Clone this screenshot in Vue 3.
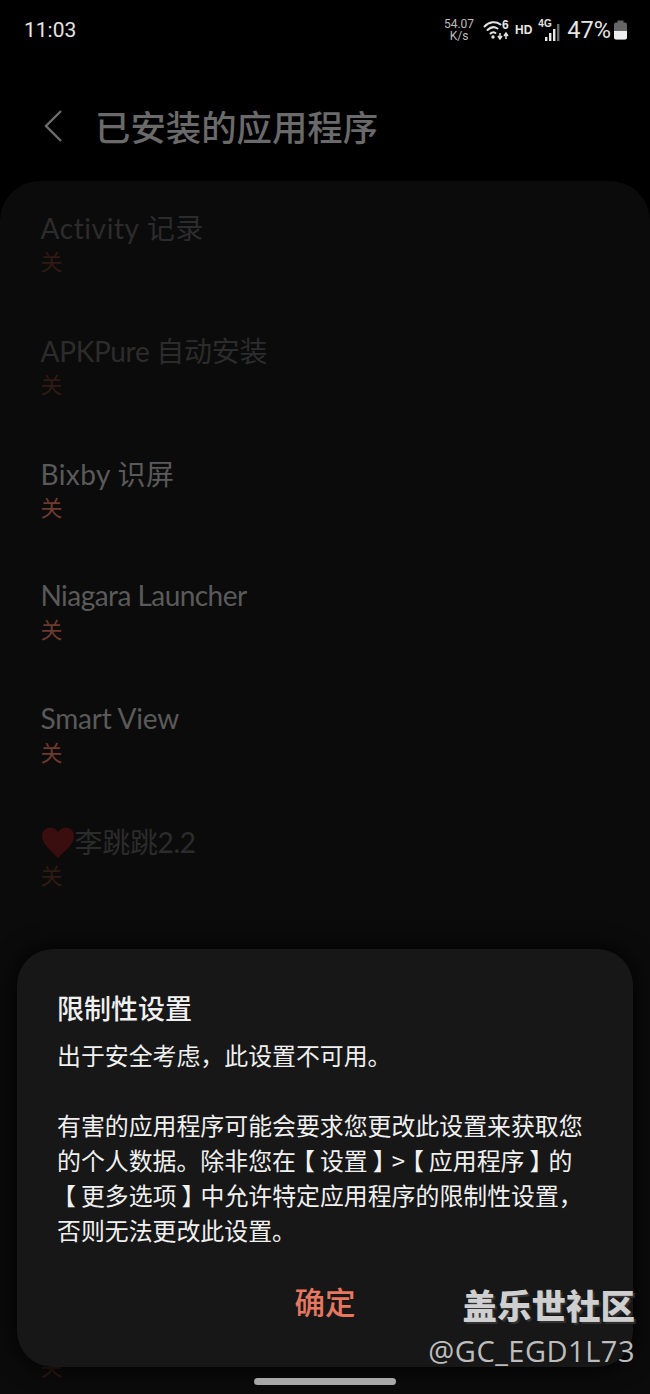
<script setup>
// track 是各行的字距，原图字体比 Lato 略宽或略窄
// covered 的行被弹窗完全挡住，不渲染文字
const apps = [
  { name: 'Activity 记录', tone: 'dim', track: '0.6px' },
  { name: 'APKPure 自动安装', tone: 'dim', track: '-0.3px' },
  { name: 'Bixby 识屏', tone: 'bright', track: '0.4px' },
  { name: 'Niagara Launcher', tone: 'bright', track: '-0.55px' },
  { name: 'Smart View', tone: 'bright', track: '-0.2px' },
  { name: '李跳跳2.2', tone: 'dim', heart: true, track: '-0.3px' },
  { name: '', tone: 'dim', covered: true },
  { name: '', tone: 'dim', covered: true },
  { name: '', tone: 'dim', covered: true },
  { name: '', tone: 'dim' }
]
</script>

<template>
  <div class="screen">
    <!-- 状态栏 -->
    <div class="status-bar">
      <span class="time">11:03</span>
      <div class="status-right">
        <div class="speed"><span>54.07</span><span>K/s</span></div>
        <svg class="wifi" width="28" height="22" viewBox="0 0 28 22">
          <g fill="none" stroke="#e4e4e4" stroke-width="2" stroke-linecap="round">
            <path d="M1.5 7.5C6 2.5 13 2 17.5 5.5" />
            <path d="M4.5 11C7.5 8 11.500 7.500 14.500 9.500" />
            <path d="M7.500 14.500C9 13 11 13 12.500 14" />
          </g>
          <circle cx="10" cy="18" r="1.7" fill="#e4e4e4" />
          <path d="M17 14v5M15 17l2 3 2-3M23 20v-5M21 17l2-3 2 3" fill="none" stroke="#e4e4e4" stroke-width="1.5" />
          <text x="19" y="10" class="wifi-six">6</text>
        </svg>
        <span class="hd">HD</span>
        <div class="signal">
          <span class="four-g">4G</span>
          <svg width="18" height="20" viewBox="0 0 18 20">
            <rect x="1" y="15" width="2.4" height="4" fill="#e8e8e8" />
            <rect x="5" y="11" width="2.4" height="8" fill="#e8e8e8" />
            <rect x="9" y="7" width="2.4" height="12" fill="#e8e8e8" />
            <rect x="13" y="2" width="2.4" height="17" fill="#6a6a6a" />
          </svg>
        </div>
        <span class="battery-text">47%</span>
        <svg width="15" height="20" viewBox="0 0 15 20">
          <rect x="4.500" y="0.500" width="6" height="2.500" fill="#666" />
          <rect x="1" y="2.500" width="13" height="17" rx="2" fill="#666" />
          <path d="M1 11h13v6.500a2 2 0 0 1-2 2H3a2 2 0 0 1-2-2z" fill="#eee" />
        </svg>
      </div>
    </div>

    <!-- 标题栏 -->
    <div class="app-bar">
      <svg class="back" width="20" height="34" viewBox="0 0 20 34">
        <path d="M18 2L3 17l15 15" fill="none" stroke="#6d6d6d" stroke-width="2.4" />
      </svg>
      <h1 class="title">已安装的应用程序</h1>
    </div>

    <!-- 应用列表 -->
    <div class="list">
      <div v-for="(app, i) in apps" :key="i" class="row" :class="app.tone">
        <div class="row-name" :style="{ letterSpacing: app.track }">
          <svg v-if="app.heart" class="heart" width="34" height="34" viewBox="0 0 34 34">
            <path d="M17 32C12 26 1 19 1 10 1 4.500 5 1.500 9.500 1.500 13 1.500 15.500 3.500 17 6.500 18.500 3.500 21 1.500 24.500 1.500 29 1.500 33 4.500 33 10 33 19 22 26 17 32Z" fill="#3a0d0f" />
          </svg>
          <span>{{ app.name }}</span>
        </div>
        <div v-if="!app.covered" class="row-state">关</div>
      </div>
    </div>

    <!-- 限制性设置弹窗 -->
    <div class="dialog">
      <h2 class="dialog-title">限制性设置</h2>
      <p class="dialog-text">出于安全考虑，此设置不可用。</p>
      <p class="dialog-text para">
        有害的应用程序可能会要求您更改此设置来获取您<br />
        的个人数据。除非您在<span class="lb">【</span>设置<span class="rb">】</span>&gt;<span class="lb">【</span>应用程序<span class="rb">】</span>的<br />
        <span class="lb">【</span>更多选项<span class="rb">】</span>中允许特定应用程序的限制性设置，<br />
        否则无法更改此设置。
      </p>
      <div class="dialog-actions">确定</div>
    </div>

    <div class="watermark">
      <div class="wm-top">盖乐世社区</div>
      <div class="wm-id">@GC_EGD1L73</div>
    </div>

    <div class="home-bar"></div>
  </div>
</template>

<style>
html, body { margin: 0; background: #000; }
</style>

<style scoped>
.screen {
  position: relative;
  width: 650px;
  height: 1394px;
  overflow: hidden;
  background: #000;
  font-family: "Roboto", "Noto Sans CJK SC", sans-serif;
}

.status-bar {
  height: 60px;
  padding: 0 22px 0 24px;
  display: flex;
  align-items: center;
  justify-content: space-between;
  color: #e6e6e6;
  box-sizing: border-box;
}

.time {
  font-size: 21px;
}

.status-right {
  display: flex;
  align-items: center;
}

.speed {
  display: flex;
  flex-direction: column;
  align-items: center;
  font-size: 12px;
  line-height: 12px;
  color: #bdbdbd;
  width: 30px;
  margin-right: 9px;
}

.wifi-six {
  font: bold 12px "Liberation Sans", sans-serif;
  fill: #e8e8e8;
}

.hd {
  font: bold 12px "Liberation Sans", sans-serif;
  margin: 0 6px 0 4px;
}

.signal {
  position: relative;
  width: 24px;
  height: 24px;
  margin-right: 5px;
  display: flex;
  justify-content: flex-end;
  align-items: flex-end;
}

.four-g {
  position: absolute;
  left: 0;
  top: 0;
  font: bold 10px "Liberation Sans", sans-serif;
}

.battery-text {
  font-size: 23.5px;
  margin-right: 2px;
}

.app-bar {
  height: 121px;
  padding: 11px 0 0 43px;
  display: flex;
  align-items: center;
  box-sizing: border-box;
}

.back {
  flex: none;
}

.title {
  margin: 0 0 0 32px;
  font-size: 35.4px;
  font-weight: 500;
  color: #6a6a6a;
  font-family: "Noto Sans CJK SC", sans-serif;
  line-height: 1;
}

.list {
  background: #0b0b0b;
  border-radius: 40px 40px 0 0;
  padding-top: 27px;
  height: 1213px;
  box-sizing: border-box;
}

.row {
  height: 122.8px;
  padding-left: 40.5px;
  box-sizing: border-box;
}

.row-name {
  display: flex;
  align-items: center;
  height: 38px;
  font-size: 28px;
  font-family: "Lato", "Noto Sans CJK SC", sans-serif;
  white-space: nowrap;
}

.row-state {
  font-size: 22px;
  line-height: 26px;
  margin-top: 1px;
  font-family: "Noto Sans CJK SC", sans-serif;
}

.row.dim .row-name { color: #2c2c2c; }
.row.dim .row-state { color: #301a14; }
.row.bright .row-name { color: #5a5a5a; }
.row.bright .row-state { color: #6e3a2e; }

.heart {
  flex: none;
  margin: 2px 0 -2px 0;
}

.dialog {
  position: absolute;
  left: 17px;
  top: 949px;
  width: 616px;
  height: 418px;
  padding: 41px 40px 0;
  box-sizing: border-box;
  background: #171717;
  border-radius: 36px;
  box-shadow: 0 0 24px #000;
  font-family: "Noto Sans CJK SC", sans-serif;
  color: #f0f0f0;
}

.dialog-title {
  margin: 0;
  font-size: 27px;
  line-height: 36px;
  font-weight: 500;
}

.dialog-text {
  margin: 11px 0 0;
  font-size: 23.9px;
  line-height: 35px;
  white-space: nowrap;
}

.dialog-text.para {
  margin-top: 35px;
}

/* 方括号用半宽字形，再用外边距留出原图的空隙 */
.lb {
  font-feature-settings: "halt";
  margin: 0 5px 0 7px;
}

.rb {
  font-feature-settings: "halt";
  margin: 0 7px 0 5px;
}

.dialog-actions {
  position: absolute;
  left: 0;
  right: 0;
  top: 330px;
  text-align: center;
  font-size: 30.5px;
  line-height: 44px;
  font-weight: 500;
  color: #e87761;
}

.watermark {
  position: absolute;
  right: 15px;
  top: 1282px;
  text-align: right;
  color: #cfcfcf;
  text-shadow: 2px 2px 1px #333;
}

.wm-top {
  font-size: 34.5px;
  line-height: 44px;
  font-weight: 900;
  font-family: "Noto Sans CJK SC", sans-serif;
}

.wm-id {
  margin-top: 5px;
  font-size: 29px;
  line-height: 40px;
  letter-spacing: 0.5px;
  font-family: "Open Sans", sans-serif;
  color: #bdbdbd;
  text-shadow: none;
}

.home-bar {
  position: absolute;
  left: 254px;
  top: 1378px;
  width: 142px;
  height: 7px;
  border-radius: 4px;
  background: #a8a8a8;
}
</style>
